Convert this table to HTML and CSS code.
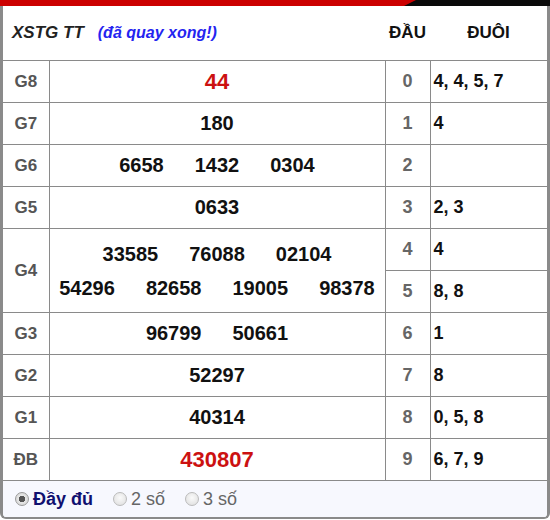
FILE: index.html
```html
<!DOCTYPE html>
<html lang="vi">
<head>
<meta charset="utf-8">
<title>XSTG</title>
<link rel="stylesheet" href="styles.css">
</head>
<body>
<div class="board">
  <div class="topbar"></div>
  <div class="frame">
    <table class="kq">
      <colgroup>
        <col class="c-label"><col class="c-nums"><col class="c-dau"><col class="c-duoi">
      </colgroup>
      <thead>
        <tr>
          <th colspan="2" class="title"><span class="name">XSTG TT</span><span class="status">(đã quay xong!)</span></th>
          <th class="h-dau">ĐẦU</th>
          <th class="h-duoi">ĐUÔI</th>
        </tr>
      </thead>
      <tbody>
        <tr><td class="lbl">G8</td><td class="nums big"><div class="line"><span>44</span></div></td><td class="dau">0</td><td class="duoi">4, 4, 5, 7</td></tr>
        <tr><td class="lbl">G7</td><td class="nums"><div class="line"><span>180</span></div></td><td class="dau">1</td><td class="duoi">4</td></tr>
        <tr><td class="lbl">G6</td><td class="nums"><div class="line"><span>6658</span><span>1432</span><span>0304</span></div></td><td class="dau">2</td><td class="duoi"></td></tr>
        <tr><td class="lbl">G5</td><td class="nums"><div class="line"><span>0633</span></div></td><td class="dau">3</td><td class="duoi">2, 3</td></tr>
        <tr>
          <td class="lbl" rowspan="2">G4</td>
          <td class="nums multi" rowspan="2">
            <div class="line"><span>33585</span><span>76088</span><span>02104</span></div>
            <div class="line"><span>54296</span><span>82658</span><span>19005</span><span>98378</span></div>
          </td>
          <td class="dau">4</td><td class="duoi">4</td>
        </tr>
        <tr><td class="dau">5</td><td class="duoi">8, 8</td></tr>
        <tr><td class="lbl">G3</td><td class="nums"><div class="line"><span>96799</span><span>50661</span></div></td><td class="dau">6</td><td class="duoi">1</td></tr>
        <tr><td class="lbl">G2</td><td class="nums"><div class="line"><span>52297</span></div></td><td class="dau">7</td><td class="duoi">8</td></tr>
        <tr><td class="lbl">G1</td><td class="nums"><div class="line"><span>40314</span></div></td><td class="dau">8</td><td class="duoi">0, 5, 8</td></tr>
        <tr><td class="lbl">ĐB</td><td class="nums big"><div class="line"><span>430807</span></div></td><td class="dau">9</td><td class="duoi">6, 7, 9</td></tr>
      </tbody>
    </table>
    <div class="footer">
      <label class="opt active"><span class="radio on"></span>Đầy đủ</label>
      <label class="opt"><span class="radio"></span>2 số</label>
      <label class="opt"><span class="radio"></span>3 số</label>
    </div>
  </div>
</div>
</body>
</html>
```
FILE: styles.css
```css
html, body {
  margin: 0;
  padding: 0;
  background: #fff;
}
body {
  font-family: "Liberation Sans", Arial, sans-serif;
}
.board {
  width: 550px;
  height: 520px;
  position: relative;
}
.topbar {
  height: 6px;
  background: #0a0a0a;
  position: relative;
}
.topbar::before {
  content: "";
  position: absolute;
  left: 0;
  top: 0;
  bottom: 0;
  width: 420px;
  background: #cc0000;
  clip-path: polygon(0 0, 416px 0, 404px 100%, 0 100%);
}
.frame {
  border-left: 3px solid #8a8a8a;
  border-right: 3px solid #8a8a8a;
  border-bottom: 2px solid #8a8a8a;
  border-radius: 0 0 6px 6px;
  overflow: hidden;
}
.kq {
  width: 544px;
  border-collapse: collapse;
  table-layout: fixed;
}
.c-label { width: 46px; }
.c-nums { width: 336px; }
.c-dau { width: 45px; }
.c-duoi { width: 117px; }

.kq th {
  height: 54px;
  padding: 0;
  font-size: 17px;
  font-weight: bold;
  color: #111;
  border-bottom: 1px solid #8a8a8a;
}
.kq th.title {
  text-align: left;
  padding-left: 9px;
  font-style: italic;
}
.title .name { color: #222; }
.title .status { color: #2424f0; margin-left: 14px; font-size: 16px; }
.kq th.h-dau { text-align: center; }
.kq th.h-duoi { text-align: center; padding-left: 0; }

.kq td {
  height: 41px;
  padding: 0;
  border: 1px solid #8a8a8a;
  font-weight: bold;
}
.kq tr td:first-child { border-left: 0; }
.kq td.duoi { border-right: 0; }

.lbl {
  text-align: center;
  font-size: 17px;
  color: #555;
}
.nums {
  font-size: 20px;
  color: #111;
}
.line {
  display: flex;
  justify-content: center;
  gap: 31px;
  white-space: nowrap;
}
.nums.big {
  font-size: 22px;
  color: #cc1111;
}
.multi .line {
  height: 34px;
  line-height: 34px;
}
.dau {
  text-align: center;
  font-size: 18px;
  color: #666;
}
.duoi {
  text-align: left;
  padding-left: 3px !important;
  font-size: 18px;
  color: #111;
}

.footer {
  height: 36px;
  background: #f7f8fe;
  display: flex;
  align-items: center;
  gap: 20px;
  padding-left: 12px;
}
.opt {
  display: flex;
  align-items: center;
  gap: 4px;
  font-size: 18px;
  color: #666;
}
.opt.active {
  font-weight: bold;
  color: #101070;
}
.radio {
  width: 12px;
  height: 12px;
  border-radius: 50%;
  border: 1px solid #bbb;
  background: radial-gradient(circle at 50% 40%, #fafafa 0, #dcdcdc 100%);
  box-sizing: content-box;
}
.radio.on {
  border-color: #9a9a9a;
  background: radial-gradient(circle, #555 0 3px, #e6e6e6 3.5px, #cfcfcf 100%);
}
```
